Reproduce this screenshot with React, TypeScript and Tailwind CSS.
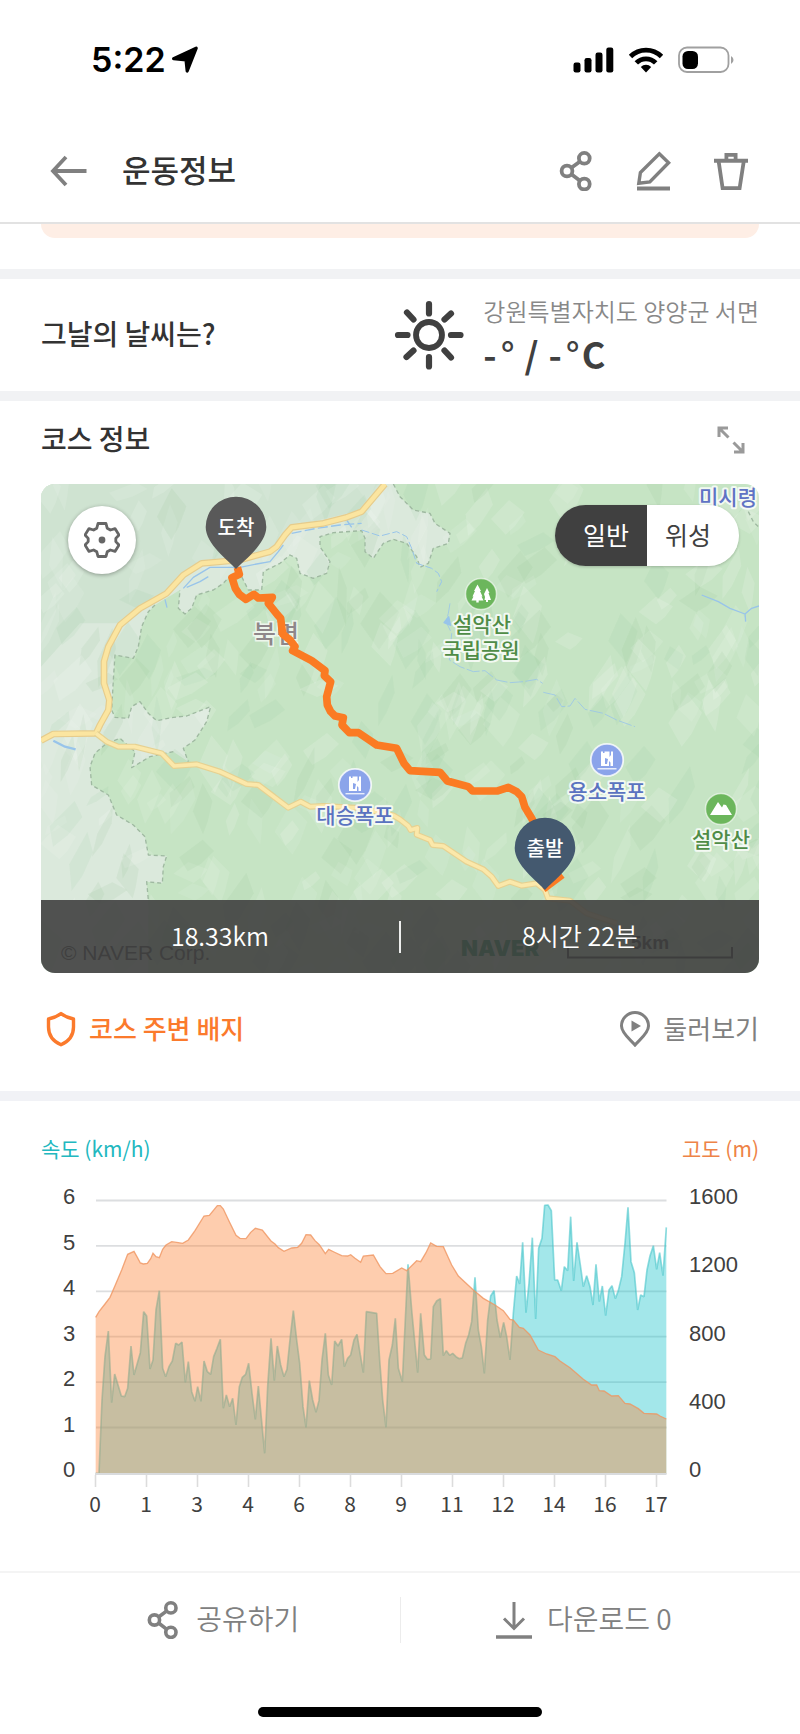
import React, { useState } from 'react';

const FONT = 'font-["Noto_Sans_CJK_KR",sans-serif]';

type IconProps = { className?: string };

function ShareIcon({ className }: IconProps) {
  return (
    <svg viewBox="0 0 40 40" fill="none" stroke="currentColor" strokeWidth="3.8" className={className} aria-hidden="true">
      <circle cx="28.3" cy="7.3" r="5.4" />
      <circle cx="11" cy="20" r="5.4" />
      <circle cx="28.3" cy="33" r="5.4" />
      <path d="M15.4 16.8 24 10.4M15.4 23.2 24 29.8" />
    </svg>
  );
}

function PencilIcon({ className }: IconProps) {
  return (
    <svg viewBox="0 0 40 40" fill="none" stroke="currentColor" strokeWidth="3.4" className={className} aria-hidden="true">
      <path d="M26.3 2.8 35.6 11.8 16.8 31 5.8 32.2 7.4 21.6Z" />
      <path d="M4 37.4H37" strokeWidth="4" />
    </svg>
  );
}

function TrashIcon({ className }: IconProps) {
  return (
    <svg viewBox="0 0 40 40" fill="none" stroke="currentColor" strokeWidth="3.8" className={className} aria-hidden="true">
      <path d="M4 9.8H38" strokeWidth="4" />
      <path d="M16.4 9V3.8H25.6V9" />
      <path d="M8.600 10 12.600 37.200H29.600L33.800 10" />
    </svg>
  );
}

function SunIcon({ className }: IconProps) {
  return (
    <svg viewBox="0 0 72 72" fill="none" stroke="currentColor" strokeLinecap="round" className={className} aria-hidden="true">
      <circle cx="36" cy="36" r="13" strokeWidth="5.8" />
      <path
        strokeWidth="6.2"
        d="M36 5V14.500M36 58V67.500M5 36H14.500M58 36H67.500M14 13.500 20.500 20.500M51.500 51.500 58 58.500M13.500 58 20.500 51.500M51.500 20.500 58 14.500"
      />
    </svg>
  );
}

function StatusBar() {
  return (
    <div className="flex h-[120px] items-center justify-between pl-[91px] pr-[66px] text-black">
      <div className="flex items-center gap-[5px]">
        <span className='font-["Inter",sans-serif] text-[34px] leading-[40px] font-semibold'>5:22</span>
        <svg viewBox="0 0 28 28" className="size-[28px]" aria-hidden="true">
          <path
            d="M25.200 2.200 16.200 25 15 13.800 2.600 12.600Z"
            fill="currentColor"
            stroke="currentColor"
            strokeWidth="3.200"
            strokeLinejoin="round"
          />
        </svg>
      </div>
      <div className="flex items-center gap-[14px]">
        <svg viewBox="0 0 41 26" className="h-[26px] w-[41px]" fill="currentColor" aria-hidden="true">
          <rect x="0.500" y="15.500" width="7" height="10" rx="2.200" />
          <rect x="11.500" y="11" width="7" height="14.500" rx="2.200" />
          <rect x="22.500" y="5.500" width="7" height="20" rx="2.200" />
          <rect x="33.300" y="0.500" width="7" height="25" rx="2.200" />
        </svg>
        <svg viewBox="0 0 36 26" className="h-[26px] w-[36px]" aria-hidden="true">
          <g fill="none" stroke="currentColor" strokeWidth="4.800">
            <path d="M2.500 9.500A22 22 0 0 1 33.500 9.500" />
            <path d="M8.300 15.900A13.600 13.600 0 0 1 27.700 15.900" />
          </g>
          <path d="M18 25.500 12.800 20A7.400 7.400 0 0 1 23.200 20Z" fill="currentColor" />
        </svg>
        <svg viewBox="0 0 56 28" className="h-[28px] w-[56px]" aria-hidden="true">
          <rect x="1" y="1.500" width="49.500" height="24.500" rx="8" fill="none" stroke="#a0a0a0" strokeWidth="1.800" />
          <path d="M53 10Q55.500 11.500 55.500 14T53 18Z" fill="#a0a0a0" />
          <rect x="4.500" y="5" width="15.500" height="18" rx="5.500" fill="currentColor" />
        </svg>
      </div>
    </div>
  );
}

function Header() {
  return (
    <header className="flex h-[104px] items-center border-b-2 border-[#e2e2e2] pr-[50px] pl-[49px] text-[#808080]">
      <button type="button" aria-label="뒤로" className="mr-[33px]">
        <svg viewBox="0 0 40 32" fill="none" stroke="currentColor" strokeWidth="3.800" className="h-[32px] w-[40px]" aria-hidden="true">
          <path d="M4 16H37.500M17 2 4 16 17 30" />
        </svg>
      </button>
      <h1 className="grow pb-[4px] text-[31px] leading-[40px] font-medium text-[#333]">운동정보</h1>
      <div className="flex items-center gap-[37px]">
        <button type="button" aria-label="공유"><ShareIcon className="size-[40px]" /></button>
        <button type="button" aria-label="수정"><PencilIcon className="size-[40px]" /></button>
        <button type="button" aria-label="삭제"><TrashIcon className="size-[40px]" /></button>
      </div>
    </header>
  );
}

function Weather() {
  return (
    <section className="flex h-[112px] items-center justify-between px-[41px] text-[#404040]">
      <h2 className="pb-[4px] text-[28px] leading-[36px] font-medium text-[#333]">그날의 날씨는?</h2>
      <div className="flex items-center gap-[18px]">
        <SunIcon className="size-[72px]" />
        <div>
          <p className="text-[24px] leading-[36px] font-[350] text-[#888]">강원특별자치도 양양군 서면</p>
          <p className="flex items-baseline text-[36px] leading-[48px] font-bold">
            <span>-</span>
            <span className="ml-[4px] font-medium">°</span>
            <span className="mx-[10px]">/</span>
            <span>-</span>
            <span className="ml-[4px] font-medium">°</span>
            <span className="ml-[2px]">C</span>
          </p>
        </div>
      </div>
    </section>
  );
}

/* Shaded relief: a fixed scatter of translucent shards. */
function makeRelief(): { d: string; fill: string }[] {
  let seed = 20240611;
  const rnd = () => {
    seed = (seed * 1664525 + 1013904223) % 4294967296;
    return seed / 4294967296;
  };
  const tones = ['#ffffff24', '#ffffff1c', '#8cc09220', '#8cc0921a', '#ffffff16'];
  return Array.from({ length: 420 }, () => {
    const cx = rnd() * 2160;
    const cy = rnd() * 1480;
    const h = 25 + rnd() * 65;
    const w = 14 + rnd() * 44;
    const lean = (rnd() - 0.3) * 50;
    const p = [
      [cx + lean, cy - h],
      [cx + w + lean * 0.4, cy - h * 0.3],
      [cx + w * 0.5 - lean * 0.3, cy + h * 0.5],
      [cx - lean, cy + h],
      [cx - w, cy + h * 0.1],
    ];
    return {
      d: 'M' + p.map(([x, y]) => Math.round(x) + ' ' + Math.round(y)).join('L') + 'Z',
      fill: tones[Math.floor(rnd() * tones.length)],
    };
  });
}
const RELIEF = makeRelief();

const EAST_EDGE =
  '1060,12 1080,50 1120,90 1170,100 1185,130 1230,160 1225,190 1180,205 1165,250 1140,262 1130,230 1100,190 1060,178 1030,190 1000,235 975,215 975,175 965,152 880,158 840,170 840,200 870,245 860,280 820,295 780,280 770,235 750,225 720,250 670,275 665,330 625,330 605,290 568,290 550,310 520,330 470,345 455,385 435,402 415,385 420,330';
const WEST_EDGE =
  '345,375 325,395 305,440 295,500 280,535 225,525 220,600 215,690 225,712 265,715 275,680 300,665 325,700 350,722 400,712 440,708 512,680 500,725 465,780 430,805 445,845';
const SOUTH_EDGE =
  '400,815 330,830 275,863 285,815 240,775 200,790 165,820 150,860 155,915 205,945 230,1005 280,1035 315,1070 325,1125 380,1128 370,1160 367,1210 320,1205 325,1260';
const MAIN_ROAD =
  '1035,12 965,95 920,112 850,130 755,142 735,165 710,200 690,215 600,240 485,250 430,285 380,340 300,385 240,435 205,500 192,545 192,610 208,660 205,690 180,735 168,760 40,762 3,782';
const SOUTH_ROAD =
  '168,760 200,785 235,800 285,800 365,820 402,858 470,853 540,875 620,912 655,915 745,983 782,965 810,980 850,978 960,984 1060,1006 1080,1018 1105,1038 1112,1050 1132,1044 1130,1064 1170,1080 1178,1095 1210,1098 1280,1145 1330,1168 1355,1190 1375,1218 1410,1205 1445,1217 1490,1210 1515,1230 1524,1255 1590,1262 1640,1300 1730,1330';
const ROUTE =
  '592,262 598,283 576,293 586,325 598,343 618,358 642,343 655,354 697,352 685,370 712,404 722,415 725,440 728,462 750,480 765,500 758,512 815,542 855,572 853,587 872,605 860,650 862,675 872,695 885,708 910,713 906,735 928,758 955,758 985,778 1010,795 1070,805 1092,850 1110,872 1200,877 1222,903 1285,920 1298,933 1373,933 1405,922 1430,935 1445,950 1455,982 1475,1015 1500,1060';

function Pin({ x, y, fill, label }: { x: number; y: number; fill: string; label: string }) {
  return (
    <g transform={`translate(${x} ${y})`}>
      <path d="M0 0C-8 -9 -30.300 -25 -30.300 -42A30.300 30.300 0 1 1 30.300 -42C30.300 -25 8 -9 0 0Z" fill={fill} />
      <text x="0" y="-34" textAnchor="middle" fill="#fff" fontSize="20" fontWeight="500">{label}</text>
    </g>
  );
}

function PlaceLabel({ x, y, fill, children }: { x: number; y: number; fill: string; children: string }) {
  return (
    <text x={x} y={y} textAnchor="middle" fill={fill} stroke="#fff" strokeOpacity="0.8" strokeWidth="4" strokeLinejoin="round" paintOrder="stroke" fontSize="21" fontWeight="500">
      {children}
    </text>
  );
}

function FallsIcon({ x, y }: { x: number; y: number }) {
  return (
    <g transform={`translate(${x} ${y})`}>
      <circle r="16.200" fill="#8ba4ea" stroke="#fff" strokeOpacity="0.800" strokeWidth="1.800" />
      <path d="M-6 -8.500H-4V-7H-2.500V-8.500H2.500V-3L4 -5V-8.500H6V6H3.500V2.500L2 1V6H-6Z" fill="#fff" />
      <path d="M-2 -2 1 -1 0 4H-2Z" fill="#8ba4ea" />
      <path d="M-9.500 8.700H9.500" stroke="#fff" strokeWidth="1.400" strokeOpacity="0.800" />
    </g>
  );
}

function MapCanvas() {
  return (
    <svg viewBox="0 0 718 489" preserveAspectRatio="xMidYMid slice" className="block h-auto w-full" role="img" aria-label="코스 지도">
      <rect width="718" height="489" fill="#c6e4c4" />
      <g transform="translate(-1 -4) scale(0.33333)" fill="none" strokeLinejoin="round">
        <polygon points={`3,12 ${EAST_EDGE} ${WEST_EDGE} ${SOUTH_EDGE} 325,1480 3,1480`} fill="#dbe9dc" />
        <polygon points="3,12 1030,12 965,90 755,140 690,212 485,248 380,338 240,430 120,430 3,560" fill="#cfe3d1" />
        {RELIEF.map((s, i) => (
          <path key={i} d={s.d} fill={s.fill} />
        ))}
        <g stroke="#9fb9a1" strokeWidth="4" strokeDasharray="12 9">
          <polyline points={EAST_EDGE} />
          <polyline points={WEST_EDGE} />
          <polyline points={SOUTH_EDGE} />
          <polyline points="2125,95 2140,125 2160,145" />
        </g>
        <g stroke="#98c4ea" strokeWidth="4">
          <path d="M430 325 460 292 510 262 600 262 650 252 690 245 715 215 730 195M440 322 480 305 505 290" />
          <path d="M755 160 830 145 900 135 965 130M920 120 935 142" strokeDasharray="30 10" />
          <path d="M375 358 381 383" />
          <path d="M965 150 1020 168 1070 155 1100 170 1115 205 1130 250 1175 265 1195 280 1205 305 1190 335" strokeWidth="3" strokeDasharray="24 8" />
          <path d="M1230 370 1225 400 1218 425 1235 460 1228 540 1260 560 1300 575 1335 572 1370 600 1410 608 1450 605 1490 598 1508 610M1510 637 1545 645 1565 680 1590 678 1605 655 1635 688 1690 700 1730 720 1785 740" strokeWidth="3" strokeDasharray="40 7" strokeOpacity="0.8" />
          <path d="M1985 345 2035 365 2070 385 2115 402 2135 385 2157 378M2115 400 2117 425" />
          <path d="M1212 428 1226 410 1232 436Z" fill="#98c4ea" />
          <path d="M40 782 75 800 107 808" strokeWidth="7" />
        </g>
        <polyline points={MAIN_ROAD} stroke="#e6cc8c" strokeWidth="20" />
        <polyline points={MAIN_ROAD} stroke="#fbe5a0" strokeWidth="13" />
        <polyline points={SOUTH_ROAD} stroke="#e6d191" strokeWidth="18" />
        <polyline points={SOUTH_ROAD} stroke="#fbe8aa" strokeWidth="11" />
      </g>
      <text x="235" y="159" textAnchor="middle" fill="#8f878a" stroke="#fff" strokeOpacity="0.700" strokeWidth="3" paintOrder="stroke" fontSize="25" fontWeight="500">북면</text>
      <g transform="translate(-1 -4) scale(0.33333)" fill="none" stroke="#fb7b23" strokeWidth="23" strokeLinejoin="round">
        <polyline points={ROUTE} />
        <path d="M1512 1230 1569 1187" strokeWidth="16" />
      </g>

      <g transform="translate(440 110)">
        <circle r="15.500" fill="#6cb65c" stroke="#fff" strokeOpacity="0.600" strokeWidth="1.500" />
        <path d="M-3.500 -9.500 0 -3H-1L1.500 2.500H.5L2.500 6.500H-2.300V8.500H-4.700V6.500H-9.500L-7.500 2.500H-8.500L-6 -3H-7ZM6 -6 8.500 -1H7.500L10 6H7V8H5V6H3.500L4 3 3 0Z" fill="#fff" />
      </g>
      <PlaceLabel x={441} y={148} fill="#4f8c46">설악산</PlaceLabel>
      <PlaceLabel x={440} y={174} fill="#4f8c46">국립공원</PlaceLabel>
      <FallsIcon x={314} y={301} />
      <PlaceLabel x={314} y={339} fill="#5a73c0">대승폭포</PlaceLabel>
      <FallsIcon x={566} y={276} />
      <PlaceLabel x={566} y={315} fill="#5a73c0">용소폭포</PlaceLabel>
      <g transform="translate(680 325)">
        <circle r="15.500" fill="#6cb65c" stroke="#fff" strokeOpacity="0.600" strokeWidth="1.500" />
        <path d="M-11 6 -3 -7 1 -1.500 2.500 -4.500 5 -4 11 6Z" fill="#fff" />
      </g>
      <PlaceLabel x={680} y={363} fill="#4f8c46">설악산</PlaceLabel>
      <PlaceLabel x={687} y={21} fill="#5f73c4">미시령</PlaceLabel>

      <Pin x={195} y={85} fill="#595959" label="도착" />
      <Pin x={504} y={406} fill="#44596f" label="출발" />

      <text x="20" y="476" fill="#333" fontSize="21" fontFamily="Liberation Sans, sans-serif">© NAVER Corp.</text>
      <text x="420" y="472" fill="#0a8a45" fontSize="22" fontWeight="900" fontFamily="Inter, sans-serif">NAVER</text>
      <text x="590" y="465" fill="#222" fontSize="19" fontWeight="700" fontFamily="Liberation Sans, sans-serif">5km</text>
      <path d="M527 463V473.500H691V463" fill="none" stroke="#222" strokeWidth="2" />
    </svg>
  );
}

function CourseMap() {
  const [layer, setLayer] = useState<'normal' | 'satellite'>('normal');
  return (
    <div className="relative overflow-hidden rounded-[14px]">
      <MapCanvas />
      <button type="button" aria-label="지도 설정" className="absolute top-[22px] left-[27px] flex size-[68px] items-center justify-center rounded-full bg-white shadow-[0_1px_4px_#0005]">
        <svg viewBox="0 0 36 36" className="size-[36px] text-[#666]" aria-hidden="true">
          <path
            d="M14 1.500H22L23.200 6.200 26.400 8 31 6.600 35 13 31.800 16.400V19.600L35 23 31 29.400 26.400 28 23.200 29.800 22 34.500H14L12.800 29.800 9.600 28 5 29.400 1 23 4.200 19.600V16.400L1 13 5 6.600 9.600 8 12.800 6.200Z"
            fill="none"
            stroke="currentColor"
            strokeWidth="2.800"
            strokeLinejoin="round"
          />
          <circle cx="18" cy="18" r="3.400" fill="currentColor" />
        </svg>
      </button>
      <div className="absolute top-[21px] right-[20px] flex h-[61px] overflow-hidden rounded-full text-[25px] leading-[56px] shadow-[0_1px_3px_#0003]">
        <button
          type="button"
          aria-pressed={layer === 'normal'}
          onClick={() => setLayer('normal')}
          className="w-[92px] bg-white pb-[3px] pl-[10px] text-[#404040] aria-pressed:bg-[#404040] aria-pressed:text-white"
        >
          일반
        </button>
        <button
          type="button"
          aria-pressed={layer === 'satellite'}
          onClick={() => setLayer('satellite')}
          className="w-[92px] bg-white pr-[10px] pb-[3px] text-[#404040] aria-pressed:bg-[#404040] aria-pressed:text-white"
        >
          위성
        </button>
      </div>
      <div className="absolute inset-x-0 bottom-0 flex h-[73px] items-center bg-[#404040]/90 text-center text-[25px] leading-[36px] font-[350] text-white">
        <span className="flex-1 pb-[4px]">18.33km</span>
        <span className="h-[32px] w-[2px] bg-white/90" />
        <span className="flex-1 pb-[4px]">8시간 22분</span>
      </div>
    </div>
  );
}

const ELEVATION =
  '197,442 207,425 225,402 240,382 255,347 275,300 293,253 312,244 322,262 331,279 340,282 352,280 362,266 369,250 378,260 388,263 398,238 408,225 425,215 445,218 458,220 475,210 495,182 522,138 538,136 562,107 571,107 580,117 598,155 618,196 630,205 648,206 662,187 676,175 697,180 723,213 735,222 745,233 762,244 785,234 803,232 815,220 828,194 842,195 855,212 868,224 886,251 896,238 912,246 935,257 953,258 962,254 975,265 992,277 1000,258 1030,255 1050,290 1068,311 1088,310 1115,294 1130,302 1160,272 1172,275 1188,248 1202,219 1220,229 1240,230 1265,285 1285,318 1330,360 1360,385 1395,405 1420,422 1440,448 1450,450 1468,472 1480,475 1500,495 1525,540 1550,552 1575,560 1590,573 1620,593 1660,628 1685,645 1700,645 1708,662 1722,663 1745,678 1765,677 1785,700 1800,702 1825,716 1842,730 1880,732 1890,738 1909,747';
const SPEED =
  '197,910 207,910 216,690 225,560 235,483 245,698 254,612 264,645 274,678 284,680 293,655 303,528 312,615 322,580 331,548 341,425 350,438 360,597 369,570 378,420 388,362 398,595 407,620 417,590 427,573 437,520 446,525 456,516 466,637 475,575 485,665 495,694 503,650 513,694 522,573 532,605 542,613 551,560 561,535 571,508 580,715 589,675 599,710 608,685 618,765 628,650 637,622 647,613 656,580 666,670 676,748 685,648 695,755 704,850 713,650 723,505 733,632 742,528 752,585 762,620 771,598 781,500 790,422 800,510 809,580 819,710 828,772 838,632 848,690 858,727 867,692 876,570 886,490 895,615 905,645 914,513 924,528 935,508 943,590 953,565 962,555 972,510 981,493 991,555 1000,608 1009,425 1040,430 1049,570 1058,690 1068,772 1077,570 1087,525 1096,445 1105,595 1117,635 1134,283 1145,420 1163,608 1172,430 1183,555 1192,568 1202,567 1210,410 1220,393 1231,386 1240,557 1249,542 1259,556 1268,550 1278,560 1288,566 1297,564 1307,520 1316,495 1325,455 1335,322 1345,480 1354,530 1363,610 1373,450 1382,378 1392,362 1401,450 1411,503 1421,457 1430,500 1440,570 1450,430 1460,318 1469,342 1478,217 1488,428 1497,340 1507,203 1517,447 1526,235 1536,205 1544,106 1554,105 1564,122 1574,330 1583,330 1594,362 1603,290 1613,302 1622,140 1631,333 1641,217 1651,285 1660,350 1670,317 1680,350 1689,405 1698,283 1708,395 1717,348 1727,437 1737,360 1746,347 1756,386 1765,362 1775,320 1785,220 1794,112 1803,275 1813,308 1823,420 1832,375 1842,380 1851,300 1860,258 1870,227 1880,298 1889,248 1899,317 1909,172';
const DISTANCES = ['0', '1', '3', '4', '6', '8', '9', '11', '12', '14', '16', '17'];
const SPEEDS = ['6', '5', '4', '3', '2', '1', '0'];
const HEIGHTS = ['1600', '1200', '800', '400', '0'];

function Chart() {
  return (
    <svg viewBox="0 0 718 350" className="block h-auto w-full" role="img" aria-label="속도와 고도 그래프">
      {SPEEDS.slice(0, 6).map((s, i) => (
        <path key={s} d={`M55 ${30.5 + i * 45.4}H625.500`} stroke="#dcdee0" strokeWidth="1.800" />
      ))}
      <g transform="translate(-11 0) scale(0.33333)">
        <polygon points={`${SPEED} 1909,912 197,912`} fill="#19c3ca" fillOpacity="0.4" />
        <polyline points={SPEED} fill="none" stroke="#48c4ca" strokeOpacity="0.600" strokeWidth="5" strokeLinejoin="bevel" />
        <polygon points={`${ELEVATION} 1909,912 197,912`} fill="#fd8235" fillOpacity="0.4" />
        <polyline points={ELEVATION} fill="none" stroke="#ef9560" strokeOpacity="0.800" strokeWidth="4" />
      </g>
      <path d="M54 304H625.500" stroke="#d9dbdd" strokeWidth="2" />
      {DISTANCES.map((d, i) => (
        <g key={d}>
          <path d={`M${54.500 + i * 51} 305V317`} stroke="#dcdcdc" strokeWidth="1.600" />
          <text x={54 + i * 51} y="342" textAnchor="middle" fontSize="21" fill="#404040">{d}</text>
        </g>
      ))}
      <g fontFamily="Liberation Sans, sans-serif" fontSize="22" fill="#404040">
        {SPEEDS.map((s, i) => (
          <text key={s} x="28" y={34 + i * 45.5} textAnchor="middle">{s}</text>
        ))}
        {HEIGHTS.map((h, i) => (
          <text key={h} x="648" y={34 + i * 68.250}>{h}</text>
        ))}
      </g>
    </svg>
  );
}

export default function App() {
  return (
    <div className={`flex min-h-screen flex-col bg-white ${FONT}`}>
      <StatusBar />
      <Header />
      <div className="px-[41px] pb-[31px]">
        <div className="h-[14px] rounded-b-[14px] bg-[#feeee5]" />
      </div>
      <div className="h-[10px] bg-[#f1f2f4]" />
      <Weather />
      <div className="h-[10px] bg-[#f1f2f4]" />

      <section className="px-[41px]">
        <div className="flex h-[83px] items-center justify-between pb-[6px]">
          <h2 className="pb-[3px] text-[28px] leading-[36px] font-medium text-[#333]">코스 정보</h2>
          <button type="button" aria-label="지도 확대" className="mr-[14px]">
            <svg viewBox="0 0 28 28" className="size-[28px]" fill="none" stroke="#9a9a9a" strokeWidth="3" aria-hidden="true">
              <path d="M2 11V2H11M2 2 11.500 11.500M26 17V26H17M26 26 16.500 16.500" />
            </svg>
          </button>
        </div>
        <CourseMap />
        <div className="flex h-[118px] items-center justify-between pb-[6px] text-[26px] leading-[36px]">
          <a href="#badges" className="flex items-center gap-[12px] pl-[4px] font-medium text-[#fb7a2c]">
            <svg viewBox="0 0 32 36" className="h-[36px] w-[32px]" fill="none" stroke="currentColor" strokeWidth="3.400" strokeLinejoin="round" aria-hidden="true">
              <path d="M16 2.500Q21 6.500 28.500 8V16C28.500 25 23.500 30.500 16 33.800 8.500 30.500 3.500 25 3.500 16V8Q11 6.500 16 2.500Z" />
            </svg>
            <span className="pb-[2px]">코스 주변 배지</span>
          </a>
          <a href="#explore" className="flex items-center gap-[12px] text-[#808080]">
            <svg viewBox="0 0 32 36" className="h-[36px] w-[32px]" fill="none" stroke="currentColor" strokeWidth="3" aria-hidden="true">
              <path d="M16 34C12 29 2.500 22.500 2.500 15A13.500 13.500 0 0 1 29.500 15C29.500 22.500 20 29 16 34Z" />
              <path d="M12.500 9.500 22 15 12.500 20.500Z" fill="currentColor" stroke="none" />
            </svg>
            <span className="pb-[2px]">둘러보기</span>
          </a>
        </div>
      </section>
      <div className="h-[10px] bg-[#f1f2f6]" />

      <section className="px-[41px] pt-[31px]">
        <div className="flex justify-between text-[21px] leading-[32px]">
          <span className="text-[#22b8bf]">속도 (km/h)</span>
          <span className="text-[#ee8347]">고도 (m)</span>
        </div>
        <div className="pt-[6px]">
          <Chart />
        </div>
      </section>

      <footer className="mt-auto border-t-2 border-[#f4f4f4] text-[28px] leading-[40px] font-[350] text-[#808080]">
        <div className="grid h-[94px] grid-cols-[1fr_auto_1fr] items-center">
          <button type="button" className="flex items-center justify-center gap-[14px] pl-[44px]">
            <ShareIcon className="size-[38px]" />
            <span className="pb-[4px]">공유하기</span>
          </button>
          <span className="h-[46px] w-px bg-[#ececec]" />
          <button type="button" className="flex items-center justify-center gap-[14px] pr-[34px]">
            <svg viewBox="0 0 38 38" className="size-[38px]" fill="none" stroke="currentColor" strokeWidth="3" aria-hidden="true">
              <path d="M19 1V27M9 17.500 19 27.500 29 17.500" />
              <path d="M1 36H37" strokeWidth="3.600" />
            </svg>
            <span className="pb-[4px]">다운로드 0</span>
          </button>
        </div>
        <div className="flex h-[67px] items-end justify-center pb-[17px]">
          <div className="h-[10px] w-[284px] rounded-full bg-black" />
        </div>
      </footer>
    </div>
  );
}
